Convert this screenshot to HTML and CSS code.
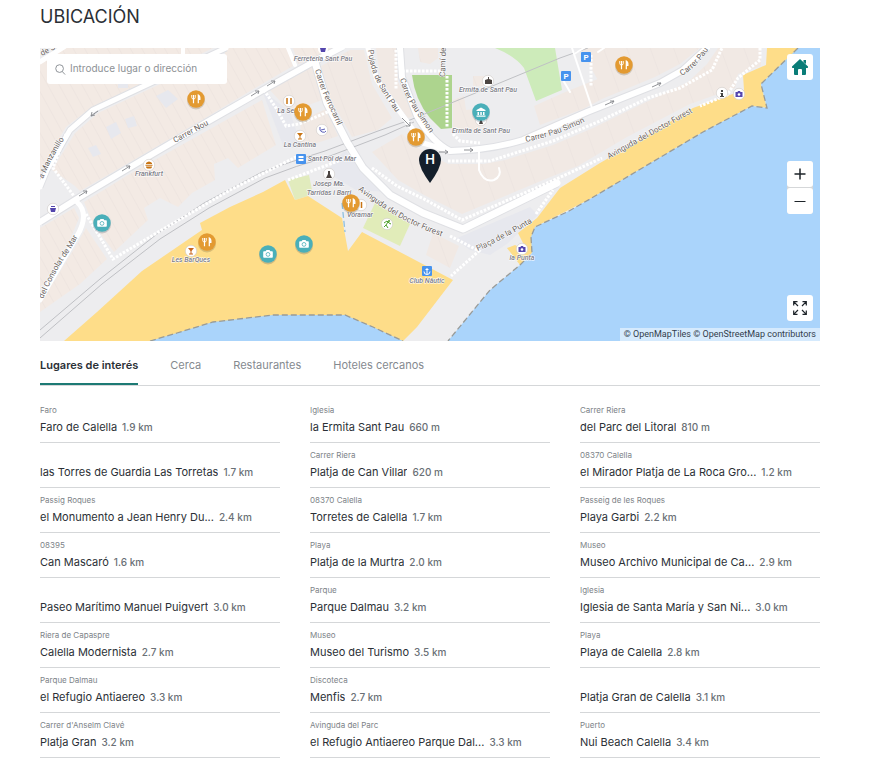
FILE: index.html
```html
<!DOCTYPE html>
<html lang="es">
<head>
<meta charset="utf-8">
<meta name="viewport" content="width=device-width, initial-scale=1">
<title>Ubicación</title>
<link rel="stylesheet" href="styles.css">
</head>
<body>
<main class="location">
  <h2 class="title">UBICACIÓN</h2>

  <section class="map" aria-label="Mapa">
    <svg class="map-canvas" viewBox="40 48 780 293" preserveAspectRatio="xMidYMid slice">
      <defs>
        <pattern id="lots" width="10" height="40" patternUnits="userSpaceOnUse" patternTransform="rotate(-29)">
          <rect width="10" height="40" fill="#f3eae4"/>
          <path d="M0 0V40" stroke="#e9e1dc" stroke-width="1" fill="none"/>
        </pattern>
        <pattern id="lots-b" width="22" height="60" patternUnits="userSpaceOnUse" patternTransform="rotate(-20)">
          <rect width="22" height="60" fill="#f1e9e4"/>
          <path d="M0 0V60" stroke="#e9e2de" stroke-width="1" fill="none"/>
        </pattern>
        <symbol id="food" viewBox="-11 -11 22 22" overflow="visible">
          <circle cy="1.500" r="9" fill="#6b5a3c" opacity=".25"/>
          <circle r="8.700" fill="#e39a31"/>
          <path d="M-4.200-4V-1.500Q-4.200 0-2.500 0T-.8-1.500V-4M-2.500-4V-1" fill="none" stroke="#fff" stroke-width="1"/>
          <path d="M-2.500-1V4.200M2.300 4.200V-4Q4.200-3 3.900 .3H2.300" fill="#fff" stroke="#fff" stroke-width="1.200"/>
        </symbol>
        <symbol id="camera" viewBox="-11 -11 22 22" overflow="visible">
          <circle cy="1.500" r="9" fill="#456" opacity=".25"/>
          <circle r="8.700" fill="#4aafb9"/>
          <path d="M-4-2.700H-2.400L-1.500-4H1.500L2.400-2.700H4Q4.800-2.700 4.800-2V3Q4.800 3.700 4 3.700H-4Q-4.800 3.700-4.800 3V-2Q-4.800-2.700-4-2.700Z" fill="#fff"/>
          <circle cy=".4" r="1.900" fill="none" stroke="#4aafb9" stroke-width=".8"/>
        </symbol>
        <symbol id="poi" viewBox="-6 -6 12 12" overflow="visible">
          <circle r="5.700" fill="#fff" stroke="#cfc9c6" stroke-width=".6"/>
        </symbol>
        <symbol id="parking" viewBox="-5 -5 10 10" overflow="visible">
          <rect x="-5" y="-5" width="10" height="10" rx="1" fill="#4793ee"/>
        </symbol>
        <path id="p-nou" d="M175 143L215 121"/>
        <path id="p-manz" d="M43 179Q54 152 72 128"/>
        <path id="p-cons" d="M43 299Q56 270 66 256T83 226"/>
        <path id="p-ferro" d="M315 70Q319 85 325 98T345 142"/>
        <path id="p-puj" d="M368 50Q370 68 377 82T400 118"/>
        <path id="p-simon" d="M400 79Q404 94 411 105T438 145"/>
        <path id="p-simon2" d="M526 142Q564 134 594 117"/>
        <path id="p-simon3" d="M682 76Q698 66 708 50T716 28"/>
        <path id="p-furest" d="M358 190Q380 207 400 218T454 241"/>
        <path id="p-furest2" d="M609 159L704 106"/>
        <path id="p-placa" d="M478 251Q500 241 540 218"/>
      </defs>

      <rect x="40" y="48" width="780" height="293" fill="#ededef"/>

      <g fill="url(#lots)">
        <path d="M62 48H213L140 84L92 107L66 127L40 170V64Z"/>
        <path d="M225 48H287L293 66L262 84L207 117L127 164L80 191L75 186L52 170L75 133L98 113L143 92L225 54Z"/>
        <path d="M84 202L128 175L262 100L276 145L238 168L228 158L214 164L215 180L192 193L178 207L160 198L144 208L148 220L114 252L92 222Z"/>
        <path d="M40 228L74 208L79 218L71 237L40 289Z"/>
        <path d="M86 228L107 259L80 284L40 312V304L77 244Z"/>
        <path d="M293 48H340L316 57L298 64Z"/>
      </g>
      <g fill="url(#lots-b)">
        <path d="M321 66L350 50H364L372 84L392 118L378 130L352 137L330 98Z"/>
        <path d="M376 48H396L398 82L414 116L408 118L381 82Z"/>
        <path d="M268 88L312 66L322 100L290 112Z"/>
        <path d="M300 121L326 109L338 136L302 148Z"/>
        <path d="M372 152L402 134L418 148L448 164L484 164L505 160L553 145L593 128L642 104L688 82L707 64L718 48H761V66L738 74L735 88L690 104L627 137L578 166L548 178L462 214L424 195L398 180Z"/>
        <path d="M453 100L464 96L466 110L484 108L480 130H453Z"/>
        <path d="M473 76H484V86H473Z"/>
        <path d="M534 106L563 93L600 78L652 58L660 48H700L680 64L655 77L602 99L583 109L540 125Z"/>
        <path d="M580 48H660L650 66L600 84Z"/>
        <path d="M418 48H438V58L430 64L420 62Z"/>
        <path d="M433 233L459 246L450 268L426 255Z"/>
      </g>
      <g fill="#e7e8ee">
        <path d="M262 90L290 112L302 148L284 148Z"/>
        <path d="M455 239L530 207L538 215L507 244L490 255L470 250Z"/>
        <path d="M345 150L362 172L388 192L356 190L326 172Z"/>
        <path d="M82 54h16l4 8h-18zM156 96l12-6 10 9-12 9zM118 81h10v7h-10zM106 127l10-5 5 11-10 6zM125 119l9-3 3 10-9 2zM88 148l8-3 5 9-8 3z"/>
      </g>

      <path d="M412 75H452V128L441 129L430 118Q415 100 412 75Z" fill="#add48e"/>
      <path d="M495 48H555L562 90L536 101L524 68Q515 56 495 48Z" fill="#cdebba"/>
      <path d="M288 180L309 175L312 190L308 196L295 200Z" fill="#e1ebbd"/>
      <path d="M375 203L410 224L400 246L363 228Z" fill="#e1ecb9"/>

      <path d="M64 341L97 312L142 271L202 230L200 223L230 207L263 192L285 180L295 200L308 196L342 218L348 251L362 232L453 280L417 327L403 341Z" fill="#fedd89"/>
      <path d="M767 48H800L761 84L767 108L752 106L703 132L590 199L535 227L532 253L520 265L507 248L515 245L527 251L518 233L537 218L560 188L600 163L633 144L693 108L744 90L743 75L766 65Z" fill="#fedd89"/>
      <g fill="#aad4fb">
        <path d="M798 48L761 84L767 108L752 106L703 132L590 199L569 211L535 227L531 237L532 253L520 265L490 290L448 341H820V48Z"/>
        <path d="M150 341L177 333L213 322L273 315H345L373 327L403 341Z"/>
      </g>
      <g fill="none" stroke="#999b98" stroke-width="1.300" stroke-dasharray="6 3">
        <path d="M798 48L761 84L767 108L752 106L703 132L590 199L569 211L535 227L531 237L532 253L520 265L490 290L448 341"/>
        <path d="M150 341L177 333L213 322L273 315H345L373 327L403 341"/>
        <path d="M342 203L345 232" stroke="#8fc0e0"/>
      </g>

      <g fill="none" stroke="#dfe0e4" stroke-linejoin="round">
        <path d="M40 222L80 197L127 169L207 122L263 90L317 60L342 47" stroke-width="8"/>
        <path d="M40 187L47 170L70 130L93 110L140 88L213 54L226 48" stroke-width="7"/>
        <path d="M400 48L402 77L417 116Q432 142 450 151Q490 150 523 140L587 112L660 83L683 70L707 48" stroke-width="8"/>
        <path d="M315 62L327 103L347 142L363 168L390 195L423 213L463 229L557 183" stroke-width="9"/>
      </g>
      <g fill="none" stroke="#bfc0c4" stroke-width="1">
        <path d="M40 330L100 279L157 234L204 203L262 172Q290 162 325 151L378 131L410 120L490 87L560 58L588 48"/>
        <path d="M40 338L102 284L160 239L209 208L265 178Q295 166 330 156L385 135L414 122"/>
      </g>
      <g fill="none" stroke="#fff" stroke-linejoin="round" stroke-linecap="round">
        <path d="M40 222L80 197L127 169L207 122L263 90L317 60L342 47" stroke-width="6"/>
        <path d="M40 187L47 170L70 130L93 110L140 88L213 54L226 48" stroke-width="5"/>
        <path d="M40 62L64 47M77 202Q90 214 77 236L40 300" stroke-width="5"/>
        <path d="M288 48L295 65M183 48V56" stroke-width="4"/>
        <path d="M315 62L327 103L347 142L363 168L390 195L423 213L463 229L557 183" stroke-width="7"/>
        <path d="M400 48L402 77L417 116Q432 142 450 151Q490 150 523 140L587 112L660 83L683 70L707 48" stroke-width="6"/>
        <path d="M368 48L377 80L408 123L423 143L450 151" stroke-width="5"/>
        <path d="M592 108L572 48M574 54L584 48M598 52L604 48M563 80L570 92" stroke-width="2"/>
        <path d="M479 151V170Q484 183 494 180Q502 176 499 168" stroke-width="2"/>
      </g>
      <g fill="none" stroke="#fff" stroke-width="3" stroke-dasharray="2.500 1.500">
        <path d="M66 134L53 168L74 196M86 214L113 259L160 231L230 190L300 155M288 180L325 166L356 154"/>
        <path d="M264 90L276 108L286 126L299 124L330 111M396 50V90M447 76V128M402 71H440"/>
        <path d="M448 161L490 161L553 141L600 121L648 98L680 88L712 70L722 48M760 48L760 60L738 78L727 95L700 106"/>
        <path d="M372 168L397 186L424 199L462 220L552 181L602 158"/>
        <path d="M450 236L479 251L451 276M453 134L460 141L480 143M591 55V86M536 214L553 190"/>
      </g>
      <g fill="none" stroke="#85878b" stroke-width=".9">
        <path d="M91 116l7-5m-6 1l-1 4 4-1M122 171l8-5m-4 0h4l-1 3M251 96l8-5m-4 0h4l-1 3M267 86l8-5m-4 0h4l-1 3M79 196l8-5m-4 0h4l-1 3M402 118l8 8m0-4v4h-4M439 152h9m-3-2 3 2-3 2M464 150h9m-3-2 3 2-3 2M605 105l9-4m-4 0h4l-2 3M652 87l9-4m-4 0h4l-2 3"/>
      </g>

      <g class="street">
        <text><textPath href="#p-nou">Carrer Nou</textPath></text>
        <text><textPath href="#p-manz">a Manzanillo</textPath></text>
        <text><textPath href="#p-cons">del Consolat de Mar</textPath></text>
        <text><textPath href="#p-ferro">Carrer Ferrocarril</textPath></text>
        <text><textPath href="#p-puj">Pujada de Sant Pau</textPath></text>
        <text><textPath href="#p-simon">Carrer Pau Simon</textPath></text>
        <text><textPath href="#p-simon2">Carrer Pau Simon</textPath></text>
        <text><textPath href="#p-simon3">Carrer Pau</textPath></text>
        <text><textPath href="#p-furest">Avinguda del Doctor Furest</textPath></text>
        <text><textPath href="#p-furest2">Avinguda del Doctor Furest</textPath></text>
        <text><textPath href="#p-placa">Plaça de la Punta</textPath></text>
        <text transform="translate(445 77) rotate(-88)">Camí de</text>
        <text transform="translate(42 56) rotate(-28)">de S</text>
      </g>

      <g class="place">
        <text x="323" y="61">Ferreteria Sant Pau</text>
        <text x="488" y="92">Ermita de Sant Pau</text>
        <text x="481" y="133">Ermita de Sant Pau</text>
        <text x="290" y="113">La Selva</text>
        <text x="300" y="147">La Cantina</text>
        <text x="332" y="161">Sant Pol de Mar</text>
        <text x="329" y="186">Josep Ma.</text>
        <text x="329" y="195">Tarridas i Barri</text>
        <text x="149" y="176">Frankfurt</text>
        <text x="191" y="262">Les BarQues</text>
        <text x="360" y="217">Voramar</text>
        <text x="427" y="283">Club Nàutic</text>
        <text x="522" y="260">la Punta</text>
      </g>

      <g>
        <use href="#poi" x="143" y="159" width="12" height="12"/>
        <path d="M146 163Q149 160 152 163V164H146zM145.500 164.700h7v1.100h-7zM146 166.500h6q0 2-1.500 2h-3q-1.500 0-1.500-2z" fill="#c87414"/>
        <use href="#poi" x="283" y="95" width="12" height="12"/>
        <path d="M287 98v6M291 98v6" stroke="#c87414" stroke-width="1.500"/>
        <use href="#poi" x="294" y="130" width="12" height="12"/>
        <path d="M297 133h6l-2.500 3v2.500h1.500v1h-4v-1h1.500v-2.500z" fill="#c87414"/>
        <use href="#poi" x="185" y="245" width="12" height="12"/>
        <path d="M188 248h6l-2.500 3v2.500h1.500v1h-4v-1h1.500v-2.500z" fill="#c8641c"/>
        <use href="#poi" x="47" y="203" width="12" height="12"/>
        <path d="M50 208h6l-1 4h-4zM51 206h4v1h-4z" fill="#5446ad"/>
        <use href="#poi" x="316" y="124" width="12" height="12"/>
        <path d="M320 127q-1 4 2 5t4-1M321 130l4-1" fill="none" stroke="#5c61b8"/>
        <circle cx="323" cy="49" r="5" fill="#fff"/>
        <path d="M320 48h6l-1 4h-4z" fill="#5446ad"/>
        <use href="#poi" x="323" y="168" width="12" height="12"/>
        <path d="M328 171h2v3l2 4h-6l2-4z" fill="#4c4542"/>
        <use href="#poi" x="482" y="75" width="12" height="12"/>
        <path d="M485 80l3-1v-2h1v2l3 1v4h-7z" fill="#4c4542"/>
        <use href="#poi" x="475" y="114" width="12" height="12"/>
        <path d="M480 118h2v3l1 3h-4l1-3z" fill="#4c4542"/>
        <use href="#poi" x="716" y="87" width="12" height="12"/>
        <path d="M721 90h2v2h-2zM720.500 93h2.500v3h1v1h-4v-1h1v-2h-.5z" fill="#444"/>
        <use href="#poi" x="733" y="88" width="12" height="12"/>
        <path d="M735.500 92h2l.5-1h2l.5 1h2v5h-7z" fill="#5547b0"/>
        <circle cx="739" cy="94.500" r="1.300" fill="#fff"/>
        <use href="#poi" x="516" y="243" width="12" height="12"/>
        <path d="M518.500 247h2l.5-1h2l.5 1h2v5h-7z" fill="#5547b0"/>
        <circle cx="522" cy="249.500" r="1.300" fill="#fff"/>
        <use href="#poi" x="381" y="218" width="12" height="12"/>
        <path d="M384 223l3-2 2 2 2 1M388 222l-2 3 2 3M386 225l-2 2" fill="none" stroke="#4d9d29"/>
        <circle cx="389" cy="221" r="1" fill="#4d9d29"/>
        <use href="#poi" x="355" y="199" width="12" height="12"/>
        <path d="M361.500 202v6" stroke="#c87414" stroke-width="1.500"/>
        <use href="#parking" x="581" y="52" width="10" height="10"/>
        <use href="#parking" x="561" y="71" width="10" height="10"/>
        <g class="parking-letter"><text x="586" y="60">P</text><text x="566" y="79">P</text></g>
        <use href="#parking" x="296" y="154" width="10" height="10"/>
        <path d="M298.500 156h5v2h-5zM298.500 159h5v2h-5z" fill="#fff"/>
        <use href="#parking" x="422" y="266" width="10" height="10"/>
        <path d="M427 268v6M425.500 269.500h3M424 271.500q0 3 3 3t3-3" fill="none" stroke="#fff"/>
      </g>

      <g>
        <use href="#food" x="185" y="88" width="22" height="22"/>
        <use href="#food" x="292" y="101" width="22" height="22"/>
        <use href="#food" x="405" y="126" width="22" height="22"/>
        <use href="#food" x="340" y="192" width="22" height="22"/>
        <use href="#food" x="196" y="231" width="22" height="22"/>
        <use href="#food" x="613" y="54" width="22" height="22"/>
        <use href="#camera" x="91" y="212" width="22" height="22"/>
        <use href="#camera" x="257" y="243" width="22" height="22"/>
        <use href="#camera" x="293" y="233" width="22" height="22"/>
        <circle cx="481" cy="113.500" r="9" fill="#456" opacity=".25"/>
        <circle cx="481" cy="112" r="8.700" fill="#4aafb9"/>
        <path d="M476.500 110L481 107.500L485.500 110V111H476.500ZM477.500 112h1.500v3h-1.500zM480.300 112h1.500v3h-1.500zM483 112h1.500v3h-1.500zM476.500 115.500h9v1.200h-9z" fill="#fff"/>
        <path d="M430 183Q419 168 419 160A11 11 0 0 1 441 160Q441 168 430 183Z" fill="#141f2b"/>
        <text class="pin-letter" x="430" y="164">H</text>
      </g>
    </svg>

    <div class="search">
      <svg class="search-icon" viewBox="0 0 12 12"><circle cx="5" cy="5" r="4.200"/><path d="M8 8.300L11 11.500"/></svg>
      <input type="text" aria-label="Introduce lugar o dirección" placeholder="Introduce lugar o dirección">
    </div>

    <div class="controls">
      <button class="control" type="button" aria-label="Centrar en el hotel">
        <svg width="18" height="18" viewBox="0 0 18 18"><path d="M9 1L17 8.500Q17.500 10 16 10H15V16Q15 17 14 17H11V12Q11 11 10 11H8Q7 11 7 12V17H4Q3 17 3 16V10H2Q.5 10 1 8.500ZM12.500 2H15V6L12.500 4Z" fill="#0a7d78"/></svg>
      </button>
      <div class="zoom">
        <button class="control" type="button" aria-label="Acercar">
          <svg width="12" height="12" viewBox="0 0 12 12"><path d="M6 .5V11.500M.5 6H11.500" stroke="#1d2329" stroke-width="1.500"/></svg>
        </button>
        <button class="control" type="button" aria-label="Alejar">
          <svg width="12" height="12" viewBox="0 0 12 12"><path d="M.5 6.500H11.500" stroke="#1d2329" stroke-width="1"/></svg>
        </button>
      </div>
      <button class="control" type="button" aria-label="Pantalla completa">
        <svg width="14" height="14" viewBox="0 0 14 14"><path d="M.7 4.500V.7H4.500M.7 .7L5 5M9.500 .7H13.300V4.500M13.300 .7L9 5M.7 9.500V13.300H4.500M.7 13.300L5 9M13.300 9.500V13.300H9.500M13.300 13.300L9 9" fill="none" stroke="#1d2329" stroke-width="1.200"/></svg>
      </button>
    </div>

    <p class="credits"><a href="#">© OpenMapTiles</a> <a href="#">© OpenStreetMap contributors</a></p>
  </section>

  <nav class="tabs" aria-label="Lugares">
    <button class="tab tab-active" type="button">Lugares de interés</button>
    <button class="tab" type="button">Cerca</button>
    <button class="tab" type="button">Restaurantes</button>
    <button class="tab" type="button">Hoteles cercanos</button>
  </nav>

  <ul class="places">
    <li><span class="kind">Faro</span><span class="line"><span class="name">Faro de Calella</span><span class="km">1.9 km</span></span></li>
    <li><span class="kind">Iglesia</span><span class="line"><span class="name">la Ermita Sant Pau</span><span class="km">660 m</span></span></li>
    <li><span class="kind">Carrer Riera</span><span class="line"><span class="name">del Parc del Litoral</span><span class="km">810 m</span></span></li>
    <li><span class="kind"></span><span class="line"><span class="name">las Torres de Guardia Las Torretas</span><span class="km">1.7 km</span></span></li>
    <li><span class="kind">Carrer Riera</span><span class="line"><span class="name">Platja de Can Villar</span><span class="km">620 m</span></span></li>
    <li><span class="kind">08370 Calella</span><span class="line"><span class="name">el Mirador Platja de La Roca Gro...</span><span class="km">1.2 km</span></span></li>
    <li><span class="kind">Passig Roques</span><span class="line"><span class="name">el Monumento a Jean Henry Du...</span><span class="km">2.4 km</span></span></li>
    <li><span class="kind">08370 Calella</span><span class="line"><span class="name">Torretes de Calella</span><span class="km">1.7 km</span></span></li>
    <li><span class="kind">Passeig de les Roques</span><span class="line"><span class="name">Playa Garbi</span><span class="km">2.2 km</span></span></li>
    <li><span class="kind">08395</span><span class="line"><span class="name">Can Mascaró</span><span class="km">1.6 km</span></span></li>
    <li><span class="kind">Playa</span><span class="line"><span class="name">Platja de la Murtra</span><span class="km">2.0 km</span></span></li>
    <li><span class="kind">Museo</span><span class="line"><span class="name">Museo Archivo Municipal de Ca...</span><span class="km">2.9 km</span></span></li>
    <li><span class="kind"></span><span class="line"><span class="name">Paseo Marítimo Manuel Puigvert</span><span class="km">3.0 km</span></span></li>
    <li><span class="kind">Parque</span><span class="line"><span class="name">Parque Dalmau</span><span class="km">3.2 km</span></span></li>
    <li><span class="kind">Iglesia</span><span class="line"><span class="name">Iglesia de Santa María y San Ni...</span><span class="km">3.0 km</span></span></li>
    <li><span class="kind">Riera de Capaspre</span><span class="line"><span class="name">Calella Modernista</span><span class="km">2.7 km</span></span></li>
    <li><span class="kind">Museo</span><span class="line"><span class="name">Museo del Turismo</span><span class="km">3.5 km</span></span></li>
    <li><span class="kind">Playa</span><span class="line"><span class="name">Playa de Calella</span><span class="km">2.8 km</span></span></li>
    <li><span class="kind">Parque Dalmau</span><span class="line"><span class="name">el Refugio Antiaereo</span><span class="km">3.3 km</span></span></li>
    <li><span class="kind">Discoteca</span><span class="line"><span class="name">Menfis</span><span class="km">2.7 km</span></span></li>
    <li><span class="kind"></span><span class="line"><span class="name">Platja Gran de Calella</span><span class="km">3.1 km</span></span></li>
    <li><span class="kind">Carrer d'Anselm Clavé</span><span class="line"><span class="name">Platja Gran</span><span class="km">3.2 km</span></span></li>
    <li><span class="kind">Avinguda del Parc</span><span class="line"><span class="name">el Refugio Antiaereo Parque Dal...</span><span class="km">3.3 km</span></span></li>
    <li><span class="kind">Puerto</span><span class="line"><span class="name">Nui Beach Calella</span><span class="km">3.4 km</span></span></li>
  </ul>
</main>
</body>
</html>
```

FILE: styles.css
```css
* {
  box-sizing: border-box;
}

body {
  margin: 0;
  background: #fff;
  color: #2b3036;
  font-family: Inter, "Liberation Sans", sans-serif;
}

button,
input {
  font: inherit;
  color: inherit;
}

.location {
  padding: 6px 53px 0 40px;
}

.title {
  margin: 0 0 20px;
  font-size: 18px;
  line-height: 22px;
  font-weight: 400;
}

.map {
  position: relative;
  overflow: hidden;
}

.map-canvas {
  display: block;
  width: 100%;
  height: auto;
}

.street {
  font: 8px Roboto, sans-serif;
  fill: #6b6461;
  stroke: #fff;
  stroke-width: 1px;
  paint-order: stroke;
}

.place {
  font: italic 500 7px Roboto, sans-serif;
  fill: #7c7c86;
  stroke: #fff;
  stroke-width: 1px;
  paint-order: stroke;
  text-anchor: middle;
}

.parking-letter {
  font: bold 8px Roboto, sans-serif;
  fill: #fff;
  text-anchor: middle;
}

.pin-letter {
  font: 600 13px Inter, sans-serif;
  fill: #fff;
  text-anchor: middle;
}

.search {
  position: absolute;
  top: 6px;
  left: 7px;
  display: flex;
  align-items: center;
  gap: 4px;
  width: 180px;
  height: 30px;
  padding: 0 8px;
  border-radius: 3px;
  background: #fff;
}

.search-icon {
  flex: none;
  width: 11px;
  height: 11px;
  fill: none;
  stroke: #858b90;
}

.search input {
  flex: 1;
  min-width: 0;
  padding: 0 0 2px;
  border: 0;
  outline: 0;
  background: none;
  font-size: 10px;
  line-height: 14px;
}

.search input::placeholder {
  color: #8d9195;
  opacity: 1;
}

.controls {
  position: absolute;
  top: 6px;
  right: 7px;
  bottom: 20px;
  display: flex;
  flex-direction: column;
  justify-content: space-between;
}

.control {
  display: grid;
  place-items: center;
  width: 26px;
  height: 26px;
  padding: 0;
  border: 0;
  border-radius: 3px;
  background: #fff;
}

.zoom {
  display: grid;
  gap: 1px;
  border-radius: 3px;
  background: #d5d7d9;
}

.credits {
  position: absolute;
  right: 0;
  bottom: 0;
  margin: 0;
  padding: 0 4px;
  background: rgba(255, 255, 255, 0.5);
  font-family: Roboto, sans-serif;
  font-size: 9px;
  line-height: 13px;
}

.credits a {
  color: #33404c;
  text-decoration: none;
}

.tabs {
  display: flex;
  gap: 32px;
  height: 45px;
  border-bottom: 1px solid #d5d7d9;
}

.tab {
  padding: 6px 0 0;
  border: 0;
  border-bottom: 2px solid transparent;
  background: none;
  color: #858a8f;
  font-size: 11px;
  line-height: 16px;
}

.tab-active {
  border-color: #1d7a74;
  color: #2b3036;
  font-weight: 600;
}

.places {
  display: grid;
  grid-template-columns: repeat(3, minmax(0, 1fr));
  column-gap: 30px;
  margin: 12px 0 0;
  padding: 0;
  list-style: none;
}

.places li {
  padding: 5px 0;
  border-bottom: 1px solid #d5d7d9;
}

.kind {
  display: block;
  height: 14px;
  color: #7d8388;
  font-size: 8px;
  line-height: 14px;
}

.line {
  display: flex;
  align-items: baseline;
  gap: 5px;
  white-space: nowrap;
}

.name {
  overflow: hidden;
  font-size: 11px;
  line-height: 20px;
  text-overflow: ellipsis;
}

.km {
  color: #6a7076;
  font-size: 10px;
  font-weight: 500;
}
```
